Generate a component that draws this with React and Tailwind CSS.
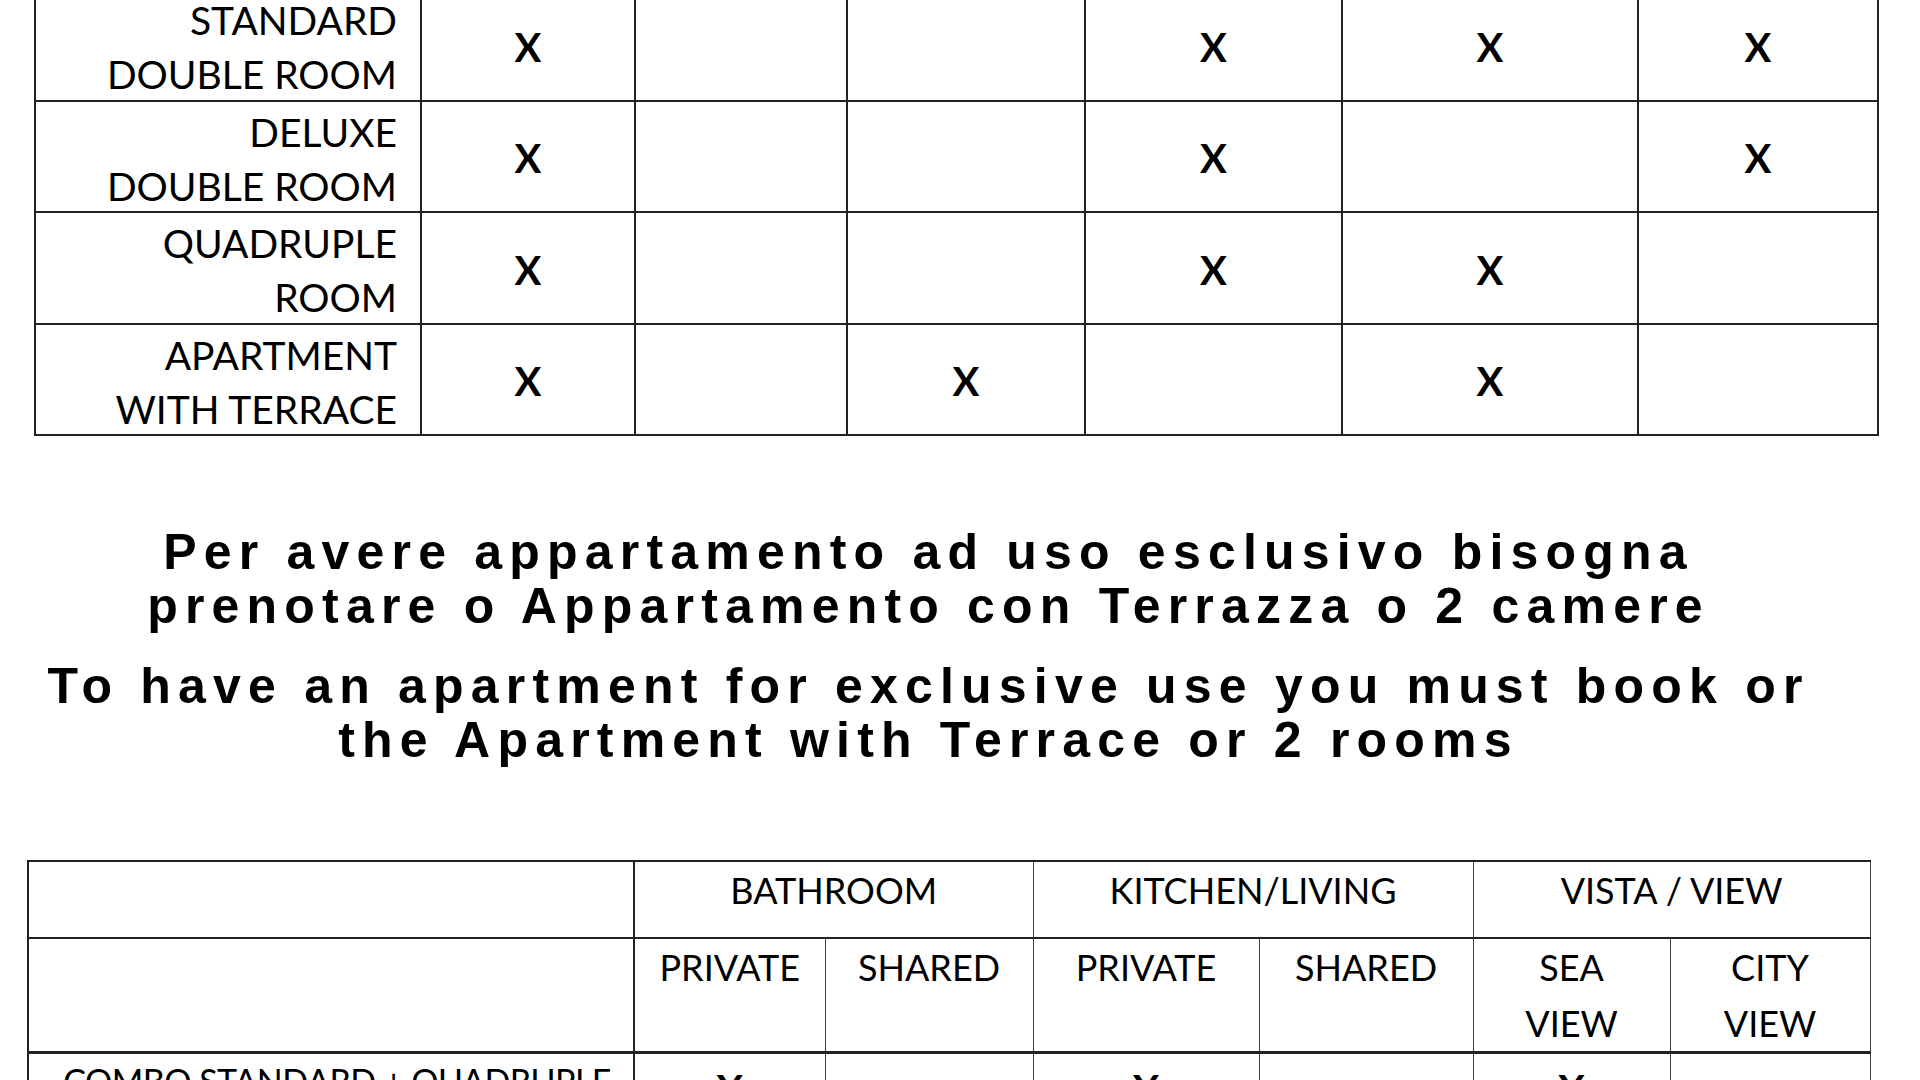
import React from 'react';

const roomRows = [
    { label: ['STANDARD', 'DOUBLE ROOM'], marks: [1, 0, 0, 1, 1, 1] },
    { label: ['DELUXE', 'DOUBLE ROOM'], marks: [1, 0, 0, 1, 0, 1] },
    { label: ['QUADRUPLE', 'ROOM'], marks: [1, 0, 0, 1, 1, 0] },
    { label: ['APARTMENT', 'WITH TERRACE'], marks: [1, 0, 1, 0, 1, 0] },
];

const comboRows = [
    { label: 'COMBO STANDARD + QUADRUPLE', marks: [1, 0, 1, 0, 1, 0] },
];

const topCols = ['w-[386px]', 'w-[214px]', 'w-[212px]', 'w-[238px]', 'w-[257px]', 'w-[296px]', 'w-[240px]'];
const bottomCols = ['w-[606px]', 'w-[191px]', 'w-[208px]', 'w-[226px]', 'w-[214px]', 'w-[197px]', 'w-[200px]'];

const RoomTable = () => (
    <table className="-mt-[12px] ml-[34px] w-[1843px] table-fixed border-collapse font-['Lato',sans-serif] text-black">
        <colgroup>
            {topCols.map((c, i) => <col key={i} className={c} />)}
        </colgroup>
        <tbody>
            {roomRows.map((row, i) => (
                <tr key={i} className="h-[111.5px]">
                    <td className="border-2 border-[#222] p-0 pr-[23px] text-right align-top text-[39px]">
                        <div className="h-[109.5px] pt-[3px] leading-[54px]">
                            {row.label[0]}<br />{row.label[1]}
                        </div>
                    </td>
                    {row.marks.map((m, j) => (
                        <td key={j} className="border-2 border-[#222] pt-[5px] text-center align-middle text-[40px] font-bold leading-[55px]">
                            {m ? 'X' : ''}
                        </td>
                    ))}
                </tr>
            ))}
        </tbody>
    </table>
);

const FeatureTable = () => (
    <table className="mt-[93px] ml-[27px] w-[1842px] table-fixed border-collapse font-['Lato',sans-serif] text-[36px] leading-[56px] text-black">
        <colgroup>
            {bottomCols.map((c, i) => <col key={i} className={c} />)}
        </colgroup>
        <tbody>
            <tr className="h-[77px]">
                <td className="border-2 border-[#222]"></td>
                <td colSpan={2} className="border-y-2 border-x border-y-[#222] border-x-[#444] pt-0 text-center align-top">BATHROOM</td>
                <td colSpan={2} className="border-y-2 border-x border-y-[#222] border-x-[#444] pt-0 text-center align-top">KITCHEN/LIVING</td>
                <td colSpan={2} className="border-y-2 border-x border-y-[#222] border-x-[#444] pt-0 text-center align-top">VISTA / VIEW</td>
            </tr>
            <tr className="h-[112px]">
                <td className="border-x-2 border-t-2 border-b-[3px] border-[#222]"></td>
                {['PRIVATE', 'SHARED', 'PRIVATE', 'SHARED'].map((t, i) => (
                    <td key={i} className="border-x border-t-2 border-b-[3px] border-x-[#444] border-t-[#222] border-b-[#222] pt-0 text-center align-top">{t}</td>
                ))}
                <td className="border-x border-t-2 border-b-[3px] border-x-[#444] border-t-[#222] border-b-[#222] pt-0 text-center align-top">SEA<br />VIEW</td>
                <td className="border-x border-t-2 border-b-[3px] border-x-[#444] border-t-[#222] border-b-[#222] pt-0 text-center align-top">CITY<br />VIEW</td>
            </tr>
            {comboRows.map((row, i) => (
                <tr key={i} className="h-[111px]">
                    <td className="whitespace-nowrap border-x-2 border-b-2 border-[#222] pr-[22px] pt-0 text-right align-top text-[34px] leading-[54px] tracking-[-0.5px]">{row.label}</td>
                    {row.marks.map((m, j) => (
                        <td key={j} className="border-x border-b-2 border-x-[#444] border-b-[#222] pt-[8px] text-center align-top text-[40px] font-bold leading-[55px]">
                            {m ? 'X' : ''}
                        </td>
                    ))}
                </tr>
            ))}
        </tbody>
    </table>
);

export default function App() {
    return (
        <div className="h-screen w-full overflow-hidden bg-white">
            <RoomTable />
            <div className="mt-[89px] w-[1857px] text-center font-['Liberation_Sans',Arial,sans-serif] text-[50px] font-bold leading-[54px] tracking-[7.2px] text-black">
                <p>Per avere appartamento ad uso esclusivo bisogna<br />prenotare o Appartamento con Terrazza o 2 camere</p>
                <p className="mt-[26px]">To have an apartment for exclusive use you must book or<br />the Apartment with Terrace or 2 rooms</p>
            </div>
            <FeatureTable />
        </div>
    );
}
